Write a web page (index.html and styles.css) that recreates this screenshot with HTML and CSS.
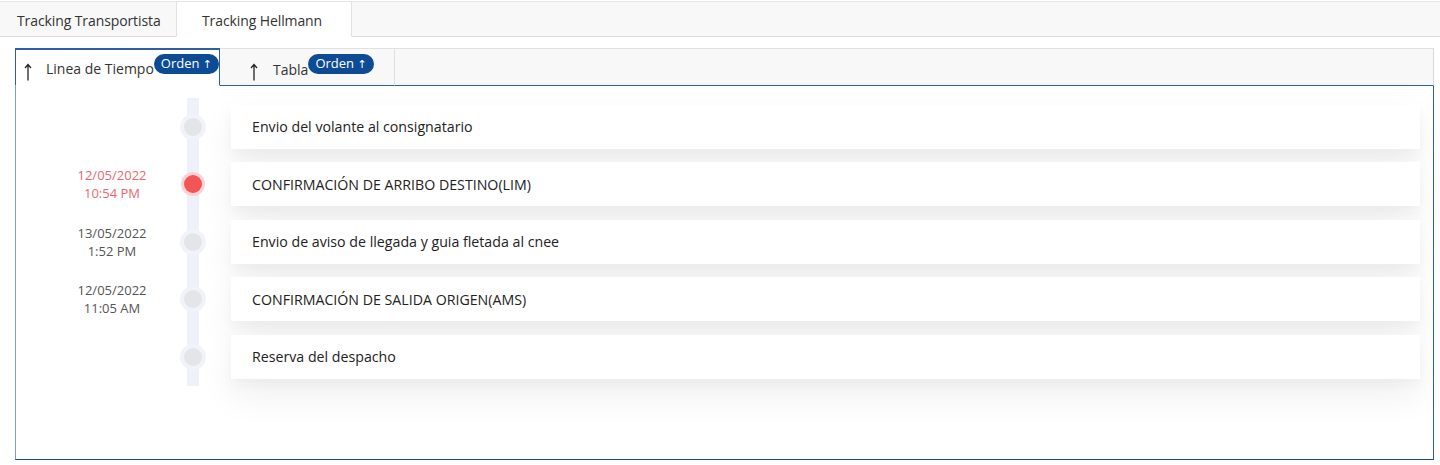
FILE: index.html
```html
<!DOCTYPE html>
<html lang="es">
<head>
<meta charset="utf-8">
<title>Tracking</title>
<link rel="stylesheet" href="styles.css">
</head>
<body>
<div class="page">
  <div class="outer-tabs">
    <div class="otab">Tracking Transportista</div>
    <div class="otab active">Tracking Hellmann</div>
    <div class="otab-fill"></div>
  </div>
  <div class="inner">
    <div class="inner-tabs">
      <div class="itab active">
        <svg class="arrow" width="8" height="18" viewBox="0 0 8 18"><path d="M4 17.5V1.5M1 5L4 1.5L7 5" fill="none" stroke="#222" stroke-width="1.3"/></svg>
        <span class="itab-label">Linea de Tiempo</span><span class="badge">Orden <span class="badge-arrow">&#8593;</span></span>
      </div>
      <div class="itab">
        <svg class="arrow" width="8" height="18" viewBox="0 0 8 18"><path d="M4 17.5V1.5M1 5L4 1.5L7 5" fill="none" stroke="#222" stroke-width="1.3"/></svg>
        <span class="itab-label">Tabla</span><span class="badge">Orden <span class="badge-arrow">&#8593;</span></span>
      </div>
      <div class="itab-fill"></div>
    </div>
    <div class="panel">
      <div class="timeline">
        <div class="row">
          <div class="date"></div>
          <div class="rail"><span class="dot"></span></div>
          <div class="card">Envio del volante al consignatario</div>
        </div>
        <div class="row">
          <div class="date red">12/05/2022<br>10:54 PM</div>
          <div class="rail"><span class="dot active"></span></div>
          <div class="card">CONFIRMACIÓN DE ARRIBO DESTINO(LIM)</div>
        </div>
        <div class="row">
          <div class="date">13/05/2022<br>1:52 PM</div>
          <div class="rail"><span class="dot"></span></div>
          <div class="card">Envio de aviso de llegada y guia fletada al cnee</div>
        </div>
        <div class="row">
          <div class="date">12/05/2022<br>11:05 AM</div>
          <div class="rail"><span class="dot"></span></div>
          <div class="card">CONFIRMACIÓN DE SALIDA ORIGEN(AMS)</div>
        </div>
        <div class="row">
          <div class="date"></div>
          <div class="rail"><span class="dot"></span></div>
          <div class="card">Reserva del despacho</div>
        </div>
      </div>
    </div>
  </div>
</div>
</body>
</html>
```
FILE: styles.css
```css
* { box-sizing: border-box; }
html, body { margin: 0; padding: 0; background: #fff; }
body {
  font-family: "Open Sans", "Noto Sans", "Liberation Sans", sans-serif;
  color: #222;
  width: 1440px;
  height: 465px;
  overflow: hidden;
}
.page { padding-top: 1px; }

.outer-tabs {
  display: flex;
  height: 36px;
  border-top: 1px solid #e6e6e6;
}
.otab {
  width: 176px;
  background: #f8f8f8;
  border-bottom: 1px solid #dedede;
  font-size: 14px;
  color: #333;
  padding: 9px 0 0 17px;
  white-space: nowrap;
  letter-spacing: -0.1px;
}
.otab.active {
  background: #fff;
  border-left: 1px solid #e2e2e2;
  border-right: 1px solid #e2e2e2;
  border-bottom-color: #fff;
  padding-left: 25px;
}
.otab-fill {
  flex: 1;
  background: #f8f8f8;
  border-bottom: 1px solid #dedede;
}

.inner {
  margin: 11px 6px 0 15px;
}
.inner-tabs {
  display: flex;
  height: 38px;
}
.itab {
  display: flex;
  align-items: center;
  width: 175px;
  background: #f8f8f8;
  border-top: 1px solid #e0e0e0;
  border-right: 1px solid #e0e0e0;
  border-bottom: 1px solid #2f5f9c;
  font-size: 14px;
  color: #333;
  padding: 4px 0 0 30px;
  white-space: nowrap;
}
.itab.active {
  width: 205px;
  background: #fff;
  border-top: 2px solid #2f5f9c;
  border-left: 1px solid #2f5f9c;
  border-right: 1px solid #2f5f9c;
  border-bottom-color: #fff;
  padding-left: 8px;
  padding-top: 2px;
}
.arrow {
  flex: none;
  margin-right: 15px;
  position: relative;
  top: 3px;
}
.itab.active .arrow { margin-right: 14px; }
.badge {
  display: inline-block;
  background: #0d4b95;
  color: #fff;
  font-size: 13px;
  line-height: 19px;
  height: 20px;
  padding: 0 7px;
  border-radius: 10px;
  position: relative;
  top: -5px;
}
.badge-arrow {
  font-family: "DejaVu Sans", sans-serif;
  font-size: 11px;
}
.itab-fill {
  flex: 1;
  background: #f8f8f8;
  border-top: 1px solid #e0e0e0;
  border-right: 1px solid #d8d8d8;
  border-bottom: 1px solid #2f5f9c;
}

.panel {
  height: 374px;
  border: 1px solid #2f5f9c;
  border-top: none;
  border-left-color: #7d9cc8;
  border-bottom-color: #1f4a7d;
  padding: 12px 13px 0 21px;
}
.timeline {
  display: flex;
  flex-direction: column;
}
.row {
  display: flex;
  align-items: stretch;
  height: 57.5px;
}
.date {
  width: 150px;
  display: flex;
  align-items: center;
  justify-content: center;
  text-align: center;
  font-size: 13px;
  line-height: 18px;
  color: #555;
}
.date.red { color: #e8696b; }
.rail {
  width: 12px;
  background: #eef1fa;
  display: flex;
  align-items: center;
  justify-content: center;
}
.dot {
  flex: none;
  width: 18px;
  height: 18px;
  border-radius: 50%;
  background: #e4e5e9;
  box-shadow: 0 0 0 4px #f1f3f9;
}
.dot.active {
  background: #f25556;
  box-shadow: 0 0 0 3px #fbd3d3;
}
.card {
  flex: 1;
  margin: 6.75px 0 6.75px 32px;
  height: 44px;
  background: #fff;
  display: flex;
  align-items: center;
  padding-left: 21px;
  font-size: 14.2px;
  color: #222;
  box-shadow: 0 16px 36px rgba(0,0,0,0.065), 0 6px 10px rgba(0,0,0,0.03);
}
```
